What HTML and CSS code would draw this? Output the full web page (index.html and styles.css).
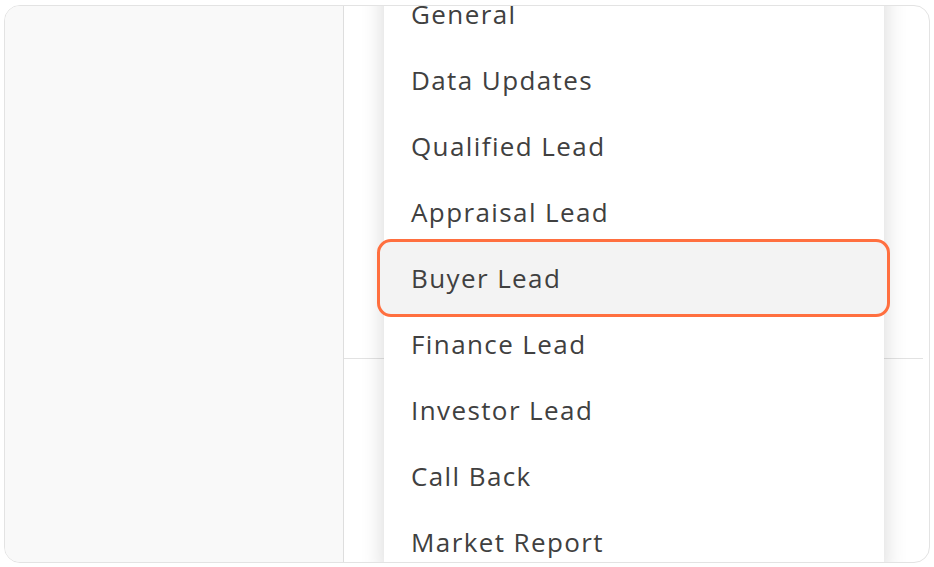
FILE: index.html
```html
<!DOCTYPE html>
<html>
<head>
<meta charset="utf-8">
<link rel="stylesheet" href="styles.css">
</head>
<body>
<div class="frame">
  <aside class="sidebar"></aside>
  <main class="main">
    <div class="top"></div>
    <ul class="menu">
      <li class="item">General</li>
      <li class="item">Data Updates</li>
      <li class="item">Qualified Lead</li>
      <li class="item">Appraisal Lead</li>
      <li class="item active">Buyer Lead</li>
      <li class="item">Finance Lead</li>
      <li class="item">Investor Lead</li>
      <li class="item">Call Back</li>
      <li class="item">Market Report</li>
    </ul>
  </main>
</div>
</body>
</html>
```
FILE: styles.css
```css
html, body {
  margin: 0;
  padding: 0;
  background: #ffffff;
}
.frame {
  margin: 5px 0 0 4px;
  width: 924px;
  height: 556px;
  border: 1px solid #e3e3e3;
  border-radius: 16px;
  overflow: hidden;
  display: flex;
  background: #ffffff;
}
.sidebar {
  width: 338px;
  flex: none;
  background: #f9f9f9;
  border-right: 1px solid #dedede;
}
.main {
  flex: 1;
  position: relative;
}
.top {
  height: 352px;
  margin-right: 6px;
  border-bottom: 1px solid #e2e2e2;
}
.menu {
  position: absolute;
  left: 40px;
  top: -25px;
  width: 500px;
  margin: 0;
  padding: 0;
  list-style: none;
  background: #ffffff;
  box-shadow: 0 0 22px rgba(0, 0, 0, 0.16);
}
.item {
  position: relative;
  z-index: 0;
  height: 66px;
  line-height: 66px;
  padding-left: 27px;
  font-family: "Open Sans", sans-serif;
  font-size: 26px;
  letter-spacing: 1.4px;
  color: #404040;
}
.item.active::before {
  content: "";
  position: absolute;
  z-index: -1;
  top: -6px;
  bottom: -6px;
  left: -7px;
  right: -6px;
  background: #f3f3f3;
  border: 3px solid #ff6f3f;
  border-radius: 14px;
}
```
